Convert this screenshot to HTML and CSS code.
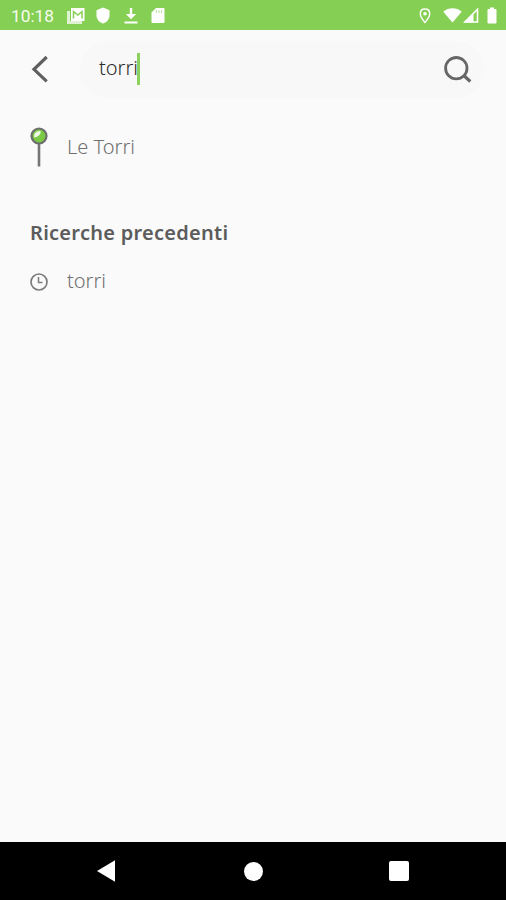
FILE: index.html
```html
<!DOCTYPE html>
<html lang="it">
<head>
<meta charset="utf-8">
<title>Ricerca</title>
<link rel="stylesheet" href="styles.css">
</head>
<body>
<div class="screen">
  <header class="status">
    <span class="time">10:18</span>
    <svg class="st-news" width="20" height="18" viewBox="0 0 20 18"><path d="M5 1h13.5v13H5z" fill="#fff"/><path d="M2.500 4V15.500h13.500" fill="none" stroke="#dff3d0" stroke-width="3"/><path d="M7.500 11.500V4.500l4.300 3.500L16 4.500v7" fill="none" stroke="#86cf55" stroke-width="1.500"/></svg>
    <svg class="st-shield" width="14" height="17" viewBox="0 0 14 17"><path d="M7 .5l6.500 2.700v5c0 4-2.700 7-6.500 8.300C3.200 15.200.5 12.200.5 8.200v-5z" fill="#fff"/></svg>
    <svg class="st-down" width="14" height="17" viewBox="0 0 14 17"><path d="M5.800 1h2.400v6h4L7 12.300 1.800 7h4zM.5 14.500h13v2H.5z" fill="#fff"/></svg>
    <svg class="st-card" width="14" height="17" viewBox="0 0 14 17"><path d="M5 1h7.500q1 0 1 1v13q0 1-1 1h-11q-1 0-1-1V5.500z" fill="#fff"/><path d="M5.500 3v3M8 3v3M10.500 3v3" stroke="#b9e59a" stroke-width="1"/></svg>
    <span class="spacer"></span>
    <svg class="st-pin" width="12" height="16" viewBox="0 0 12 16"><path d="M6 1c2.800 0 4.700 2 4.700 4.700C10.700 9 6 14.500 6 14.500S1.300 9 1.300 5.700C1.300 3 3.200 1 6 1z" fill="none" stroke="#fff" stroke-width="1.400"/><circle cx="6" cy="5.800" r="1.800" fill="#fff"/></svg>
    <svg class="st-wifi" width="19" height="16" viewBox="0 0 19 16"><path d="M.3 3.700C5.500-.8 13.500-.8 18.700 3.700L9.500 14.500z" fill="#fff"/></svg>
    <svg class="st-signal" width="16" height="16" viewBox="0 0 16 16"><path d="M14.500 1.300v12.700H1.800z" fill="none" stroke="#fff" stroke-width="1.600"/><path d="M10.500 5.500V14.500H1z" fill="#fff"/></svg>
    <svg class="st-batt" width="10" height="17" viewBox="0 0 10 17"><path d="M3 .5h4V2h1.500q1 0 1 1v12.500q0 1-1 1h-7q-1 0-1-1V3q0-1 1-1H3z" fill="#fff"/></svg>
  </header>

  <div class="searchbar">
    <svg class="back" width="20" height="30" viewBox="0 0 20 30"><path d="M17.700 3L5 15.300l12.700 12" fill="none" stroke="#5f5f5f" stroke-width="3.200"/></svg>
    <div class="field">
      <span class="query">torri</span><span class="caret"></span>
      <svg class="glass" width="30" height="30" viewBox="0 0 30 30"><circle cx="13.300" cy="13.200" r="10.700" fill="none" stroke="#666" stroke-width="2.800"/><path d="M20.800 20.500l6.500 6" stroke="#666" stroke-width="3.200"/></svg>
    </div>
  </div>

  <main class="content">
    <div class="row place">
      <svg class="pin" width="18" height="40" viewBox="0 0 18 40"><path d="M9 17v22.500" stroke="#757575" stroke-width="2.600"/><circle cx="9" cy="9" r="7.500" fill="#7acb43" stroke="#6d6d6d" stroke-width="2.200"/><path d="M4.200 10.500C3.300 6.500 6.500 3.500 10.500 4c1 3-2.500 6-6.300 6.500z" fill="#edf9e5"/></svg>
      <span class="label label-place">Le Torri</span>
    </div>
    <h2 class="heading">Ricerche precedenti</h2>
    <div class="row recent">
      <svg class="clock" width="18" height="18" viewBox="0 0 18 18"><circle cx="9" cy="9" r="8" fill="none" stroke="#7c7c7c" stroke-width="1.700"/><path d="M8.500 4v5.500H12.500" fill="none" stroke="#7c7c7c" stroke-width="1.500"/></svg>
      <span class="label">torri</span>
    </div>
  </main>

  <nav class="navbar">
    <svg class="nav-back" width="18" height="22" viewBox="0 0 18 22"><path d="M18 .3v21.400L0 11z" fill="#fff"/></svg>
    <span class="nav-home"></span>
    <span class="nav-recents"></span>
  </nav>
</div>
</body>
</html>
```

FILE: styles.css
```css
* { box-sizing: border-box; }
body { margin: 0; font-family: "Noto Sans", sans-serif; }
svg { display: block; flex: none; }
.screen {
  width: 506px;
  height: 900px;
  display: flex;
  flex-direction: column;
  background: #fafafa;
  overflow: hidden;
}
.status {
  height: 30px;
  flex: none;
  display: flex;
  align-items: center;
  padding: 1px 9px 0 11px;
  background: #86cf55;
  color: #f5fcef;
}
.time { width: 55px; font: 400 17.3px/30px Roboto, sans-serif; white-space: nowrap; }
.st-shield { margin-left: 10px; }
.st-down { margin-left: 14px; }
.st-card { margin-left: 13px; }
.spacer { flex: 1; }
.st-wifi { margin-left: 12px; }
.st-signal { margin-left: 1px; }
.st-batt { margin-left: 8px; }
.searchbar {
  height: 78px;
  flex: none;
  display: flex;
  align-items: center;
  padding: 0 22px 0 29px;
}
.back { margin-right: 31px; }
.field {
  flex: 1;
  height: 57px;
  display: flex;
  align-items: center;
  padding: 0 11px 0 19px;
  border-radius: 28px;
  background: #f8f8f8;
}
.query { font-size: 20px; line-height: 28px; color: #2c2c2c; font-weight: 350; margin-top: -2px; }
.caret { width: 3px; height: 32px; margin-left: -1px; background: #8bd15b; }
.glass { margin-left: auto; margin-top: 1px; }
.content { flex: 1; padding: 19px 30px 0; }
.row { display: flex; }
.place { height: 92px; }
.label { margin-left: 19px; color: #707070; font-size: 20px; line-height: 28px; font-weight: 350; }
.label-place { margin-top: 6px; }
.heading { margin: 0; font-size: 20px; line-height: 28px; font-weight: 600; letter-spacing: 0.27px; color: #5c5c5c; }
.recent { margin-top: 20px; }
.clock { margin-top: 6px; }
.navbar {
  height: 58px;
  flex: none;
  display: flex;
  align-items: center;
  padding-left: 97px;
  background: #000;
}
.nav-home { width: 19px; height: 19px; margin-left: 129px; border-radius: 50%; background: #fff; }
.nav-recents { width: 20px; height: 20px; margin-left: 126px; border-radius: 2px; background: #fff; }
```
